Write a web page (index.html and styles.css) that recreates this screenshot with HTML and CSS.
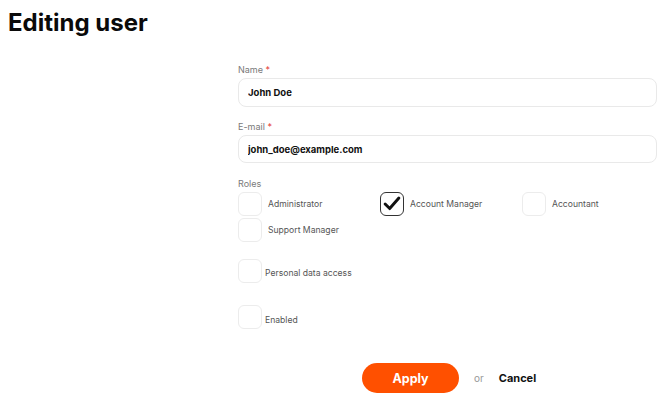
FILE: index.html
```html
<!DOCTYPE html>
<html lang="en">
<head>
<meta charset="utf-8">
<title>Editing user</title>
<link rel="stylesheet" href="styles.css">
</head>
<body>
<h1 class="title">Editing user</h1>
<form class="form">
  <div class="field">
    <label class="label">Name <span class="req">*</span></label>
    <input class="input" type="text" value="John Doe">
  </div>
  <div class="field field-email">
    <label class="label">E-mail <span class="req">*</span></label>
    <input class="input" type="text" value="john_doe@example.com">
  </div>
  <div class="field field-roles">
    <div class="label">Roles</div>
    <div class="roles">
      <label class="role"><span class="box"></span><span class="role-text">Administrator</span></label>
      <label class="role"><span class="box checked"><svg viewBox="0 0 24 24" width="22" height="22"><path d="M4.5 12 L9.5 17 L19.5 5.5" fill="none" stroke="#111" stroke-width="3.2" stroke-linecap="round" stroke-linejoin="round"/></svg></span><span class="role-text">Account Manager</span></label>
      <label class="role"><span class="box"></span><span class="role-text">Accountant</span></label>
      <label class="role"><span class="box"></span><span class="role-text">Support Manager</span></label>
    </div>
  </div>
  <label class="single single-personal"><span class="box"></span><span class="single-text">Personal data access</span></label>
  <label class="single single-enabled"><span class="box"></span><span class="single-text">Enabled</span></label>
  <div class="actions">
    <button type="button" class="apply">Apply</button>
    <span class="or">or</span>
    <a class="cancel">Cancel</a>
  </div>
</form>
</body>
</html>
```
FILE: styles.css
```css
* { box-sizing: border-box; }
body {
  margin: 0;
  background: #fff;
  font-family: "Inter", "Noto Sans", sans-serif;
  color: #111;
}
.title {
  margin: 7px 0 0 8px;
  font-size: 24px;
  line-height: 32px;
  font-weight: 700;
  color: #0a0a0a;
}
.form {
  margin: 24px 0 0 238px;
  width: 419px;
  display: flex;
  flex-direction: column;
}
.field { display: flex; flex-direction: column; }
.label {
  font-size: 9px;
  line-height: 14px;
  color: #7a7a7a;
  margin-bottom: 1px;
}
.req { color: #e53935; }
.input {
  height: 29px;
  border: 1px solid #e9e9e9;
  border-radius: 8px;
  padding: 0 9px;
  font-family: inherit;
  font-size: 9.5px;
  font-weight: 700;
  color: #111;
  outline: none;
  background: #fff;
}
.field-email { margin-top: 13px; }
.field-email .input { height: 28px; }
.field-roles { margin-top: 14px; }
.roles {
  display: grid;
  grid-template-columns: 142px 142px 135px;
  row-gap: 2px;
}
.role, .single {
  display: flex;
  align-items: center;
  font-size: 8.6px;
  color: #555;
}
.box {
  width: 24px;
  height: 24px;
  border: 1px solid #ececec;
  border-radius: 6px;
  display: flex;
  align-items: center;
  justify-content: center;
  flex: none;
}
.box.checked { border: 1.5px solid #333; }
.role-text { margin-left: 6px; }
.single-text { margin-left: 3px; line-height: 12px; position: relative; top: 2px; }
.single.single-enabled .single-text { top: 3px; }
.single-personal { margin-top: 17px; }
.single-enabled { margin-top: 22px; }
.actions {
  margin-top: 34px;
  display: flex;
  align-items: center;
  padding-left: 124px;
}
.apply {
  width: 97px;
  height: 30px;
  border: none;
  border-radius: 15px;
  background: #ff5000;
  color: #fff;
  font-family: inherit;
  font-size: 12.5px;
  font-weight: 700;
}
.or {
  margin-left: 15px;
  font-size: 10px;
  color: #999;
}
.cancel {
  margin-left: 15px;
  font-size: 11px;
  font-weight: 700;
  color: #111;
}
```
